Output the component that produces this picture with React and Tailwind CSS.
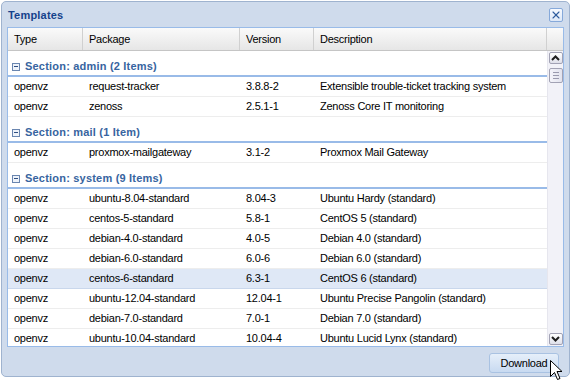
import { X } from 'lucide-react';

const groups = [
    {
        name: 'admin',
        count: '2 Items',
        rows: [
            ['openvz', 'request-tracker', '3.8.8-2', 'Extensible trouble-ticket tracking system'],
            ['openvz', 'zenoss', '2.5.1-1', 'Zenoss Core IT monitoring'],
        ],
    },
    {
        name: 'mail',
        count: '1 Item',
        rows: [['openvz', 'proxmox-mailgateway', '3.1-2', 'Proxmox Mail Gateway']],
    },
    {
        name: 'system',
        count: '9 Items',
        rows: [
            ['openvz', 'ubuntu-8.04-standard', '8.04-3', 'Ubuntu Hardy (standard)'],
            ['openvz', 'centos-5-standard', '5.8-1', 'CentOS 5 (standard)'],
            ['openvz', 'debian-4.0-standard', '4.0-5', 'Debian 4.0 (standard)'],
            ['openvz', 'debian-6.0-standard', '6.0-6', 'Debian 6.0 (standard)'],
            ['openvz', 'centos-6-standard', '6.3-1', 'CentOS 6 (standard)'],
            ['openvz', 'ubuntu-12.04-standard', '12.04-1', 'Ubuntu Precise Pangolin (standard)'],
            ['openvz', 'debian-7.0-standard', '7.0-1', 'Debian 7.0 (standard)'],
            ['openvz', 'ubuntu-10.04-standard', '10.04-4', 'Ubuntu Lucid Lynx (standard)'],
        ],
    },
];

const selected = 'centos-6-standard';

function Chevron({ up }) {
    return (
        <svg width="9" height="6" viewBox="0 0 9 6">
            <path
                d={up ? 'M1 5 L4.5 1.5 L8 5' : 'M1 1 L4.5 4.5 L8 1'}
                fill="none"
                stroke="#1e1e1e"
                strokeWidth="2"
            />
        </svg>
    );
}

function ScrollButton({ up }) {
    return (
        <div className="flex h-[12px] w-[14px] items-center justify-center rounded-[2px] border border-[#a2a2b4] bg-gradient-to-b from-[#ffffff] to-[#dfe0ea]">
            <Chevron up={up} />
        </div>
    );
}

export default function App() {
    return (
        <div className="relative h-[381px] w-[572px] bg-white pl-[1px] pt-[1px] font-['Liberation_Sans',Arial,sans-serif] text-[11px] tracking-[-0.25px] text-black">
            <div className="flex h-[376px] w-[569px] flex-col rounded-[5px] border border-[#9fb3cf] bg-[#cfdbec]">
                <div className="flex h-[25px] items-center justify-between pl-[6px] pr-[6px]">
                    <span className="pt-[2px] text-[11px] font-bold tracking-[0.2px] text-[#15428b]">Templates</span>
                    <div className="flex h-[14px] w-[14px] items-center justify-center rounded-[2px] border border-[#86a9da] bg-gradient-to-b from-[#f7faff] to-[#dde8f7]">
                        <X size={12} strokeWidth={2.2} color="#2f5c9e" />
                    </div>
                </div>

                <div className="mx-[5px] border border-[#99bbe8] bg-white">
                    <div className="flex h-[23px] border-b border-[#c5c5c5] bg-gradient-to-b from-[#fafafa] to-[#e6e6e6]">
                        <div className="grid grid-cols-[75px_157px_74px_233px]">
                            {['Type', 'Package', 'Version', 'Description'].map((h) => (
                                <div
                                    key={h}
                                    className="flex items-center border-r border-[#d0d0d0] px-[6px]"
                                >
                                    {h}
                                </div>
                            ))}
                        </div>
                        <div className="w-[16px]" />
                    </div>

                    <div className="flex h-[295px]">
                        <div className="w-[539px] overflow-hidden">
                            {groups.map((g) => (
                                <div key={g.name}>
                                    <div className="flex items-center gap-[5px] border-b-2 border-[#99bbe8] pb-[2px] pl-[4px] pt-[9px] font-bold leading-[13px] tracking-[0.2px] text-[#3764a0]">
                                        <span className="flex h-[8px] w-[8px] items-center justify-center border border-[#6a86b0] bg-[#eef3fa]">
                                            <span className="h-[1px] w-[4px] bg-[#2f4f82]" />
                                        </span>
                                        Section: {g.name} ({g.count})
                                    </div>
                                    {g.rows.map((r) => (
                                        <div
                                            key={r[1]}
                                            className={
                                                r[1] === selected
                                                    ? 'grid h-[20px] grid-cols-[75px_157px_74px_233px] items-center border-b border-[#c9d7ec] bg-[#dfe8f6]'
                                                    : 'grid h-[20px] grid-cols-[75px_157px_74px_233px] items-center border-b border-[#ededed] bg-white'
                                            }
                                        >
                                            {r.map((c, i) => (
                                                <div key={i} className="truncate px-[6px]">
                                                    {c}
                                                </div>
                                            ))}
                                        </div>
                                    ))}
                                </div>
                            ))}
                        </div>
                        <div className="flex w-[16px] flex-col items-center border-l border-[#e6e6ee] bg-[#f2f2f8] py-[1px]">
                            <ScrollButton up />
                            <div className="mt-[4px] flex h-[15px] w-[14px] flex-col items-center justify-center gap-[2px] rounded-[2px] border border-[#a2a2b4] bg-gradient-to-r from-[#f4f4fa] to-[#e2e3ee]">
                                <span className="h-[1px] w-[6px] bg-[#9a9aae]" />
                                <span className="h-[1px] w-[6px] bg-[#9a9aae]" />
                                <span className="h-[1px] w-[6px] bg-[#9a9aae]" />
                            </div>
                            <div className="flex-1" />
                            <ScrollButton />
                        </div>
                    </div>
                </div>

                <div className="flex justify-end pr-[10px] pt-[6px]">
                    <button className="h-[20px] w-[70px] rounded-[3px] border border-[#a9c2e2] bg-gradient-to-b from-[#e6effa] to-[#c8daf1] text-[11px] text-black">
                        Download
                    </button>
                </div>
            </div>

            <svg
                className="absolute left-[550px] top-[360px]"
                width="13"
                height="21"
                viewBox="0 0 13 21"
            >
                <path
                    d="M0.5 0.5 L0.5 16.5 L4.5 12.5 L7.5 19.5 L10 18.5 L7 11.5 L12 11.5 Z"
                    fill="#fff"
                    stroke="#000"
                    strokeWidth="1"
                />
            </svg>
        </div>
    );
}
